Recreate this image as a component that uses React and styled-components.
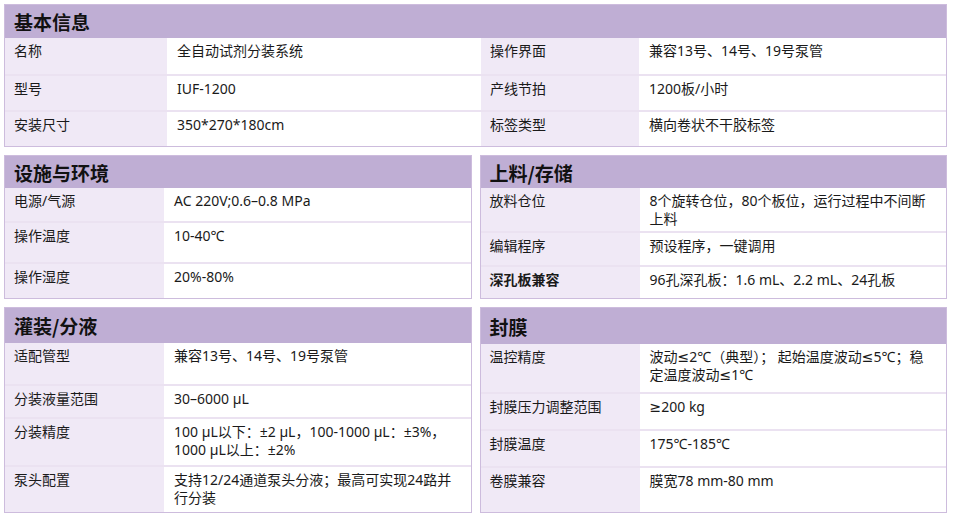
import React from 'react';
import styled, { createGlobalStyle } from 'styled-components';

const GlobalStyle = createGlobalStyle`
  *, *::before, *::after { box-sizing: border-box; }
  body {
    margin: 0;
    background: #ffffff;
    font-family: "Noto Sans", "DejaVu Sans", "Noto Sans CJK SC", sans-serif;
    color: #1a1a1a;
  }
`;

// 페이지
const Page = styled.div`
  display: flex;
  flex-direction: column;
  gap: 8px;
  padding: 4px 8px 4px 4px;
`;

// 2열 그리드
const Pair = styled.div`
  display: grid;
  grid-template-columns: 1fr 1fr;
  gap: 8px;
`;

// 패널
const Panel = styled.section`
  display: flex;
  flex-direction: column;
  border: 1px solid #cdbcdd;
  background: #ffffff;
`;

// 패널 제목
const Header = styled.h2`
  display: flex;
  align-items: center;
  margin: 0;
  height: ${(p) => p.$h}px;
  padding-left: 9px;
  background: #bfaed4;
  font-family: "Noto Sans CJK SC", sans-serif;
  font-size: 19px;
  font-weight: 700;
  color: #111;
`;

// 행
const Row = styled.div`
  display: grid;
  grid-template-columns: ${(p) => p.$cols};
  height: ${(p) => p.$h}px;
  border-top: ${(p) => (p.$first ? 'none' : '2px solid #ebe2f1')};
`;

// 라벨 셀
const Label = styled.div`
  background: #f0e9f6;
  padding: 4px 9px 0;
  font-size: 14px;
  line-height: 18px;
  font-weight: ${(p) => (p.$bold ? 700 : 400)};
`;

// 값 셀
const Value = styled.div`
  padding: 4px 10px 0;
  font-size: 14px;
  line-height: 18px;
`;

const HALF = '159px 1fr';

const basic = [
  ['名称', '全自动试剂分装系统', '操作界面', '兼容13号、14号、19号泵管'],
  ['型号', 'IUF-1200', '产线节拍', '1200板/小时'],
  ['安装尺寸', '350*270*180cm', '标签类型', '横向卷状不干胶标签'],
];

const panels = [
  [
    {
      title: '设施与环境',
      head: 32,
      rows: [
        ['电源/气源', 'AC 220V;0.6–0.8 MPa', 33],
        ['操作温度', '10-40℃', 41],
        ['操作湿度', '20%-80%', 36],
      ],
    },
    {
      title: '上料/存储',
      head: 32,
      rows: [
        ['放料仓位', '8个旋转仓位，80个板位，运行过程中不间断上料', 43],
        ['编辑程序', '预设程序，一键调用', 34],
        ['深孔板兼容', '96孔深孔板：1.6 mL、2.2 mL、24孔板', 33, true],
      ],
    },
  ],
  [
    {
      title: '灌装/分液',
      head: 35,
      rows: [
        ['适配管型', '兼容13号、14号、19号泵管', 41],
        ['分装液量范围', '30–6000 µL', 33],
        ['分装精度', '100 µL以下：±2 µL，100-1000 µL：±3%，1000 µL以上：±2%', 48],
        ['泵头配置', '支持12/24通道泵头分液；最高可实现24路并行分装', 47],
      ],
    },
    {
      title: '封膜',
      head: 36,
      rows: [
        ['温控精度', '波动≤2℃（典型）； 起始温度波动≤5℃；稳定温度波动≤1℃', 48],
        ['封膜压力调整范围', '≥200 kg', 37],
        ['封膜温度', '175℃-185℃', 37],
        ['卷膜兼容', '膜宽78 mm-80 mm', 46],
      ],
    },
  ],
];

function SpecPanel({ data }) {
  return (
    <Panel>
      <Header $h={data.head}>{data.title}</Header>
      {data.rows.map(([k, v, h, bold], i) => (
        <Row key={k} $cols={HALF} $h={h} $first={i === 0}>
          <Label $bold={bold}>{k}</Label>
          <Value>{v}</Value>
        </Row>
      ))}
    </Panel>
  );
}

export default function App() {
  return (
    <>
      <GlobalStyle />
      <Page>
        <Panel>
          <Header $h={33}>基本信息</Header>
          {basic.map((r, i) => (
            <Row key={r[0]} $cols="162px 314px 158px 1fr" $h={36} $first={i === 0}>
              <Label>{r[0]}</Label>
              <Value>{r[1]}</Value>
              <Label>{r[2]}</Label>
              <Value>{r[3]}</Value>
            </Row>
          ))}
        </Panel>
        {panels.map((pair, i) => (
          <Pair key={i}>
            {pair.map((p) => (
              <SpecPanel key={p.title} data={p} />
            ))}
          </Pair>
        ))}
      </Page>
    </>
  );
}
